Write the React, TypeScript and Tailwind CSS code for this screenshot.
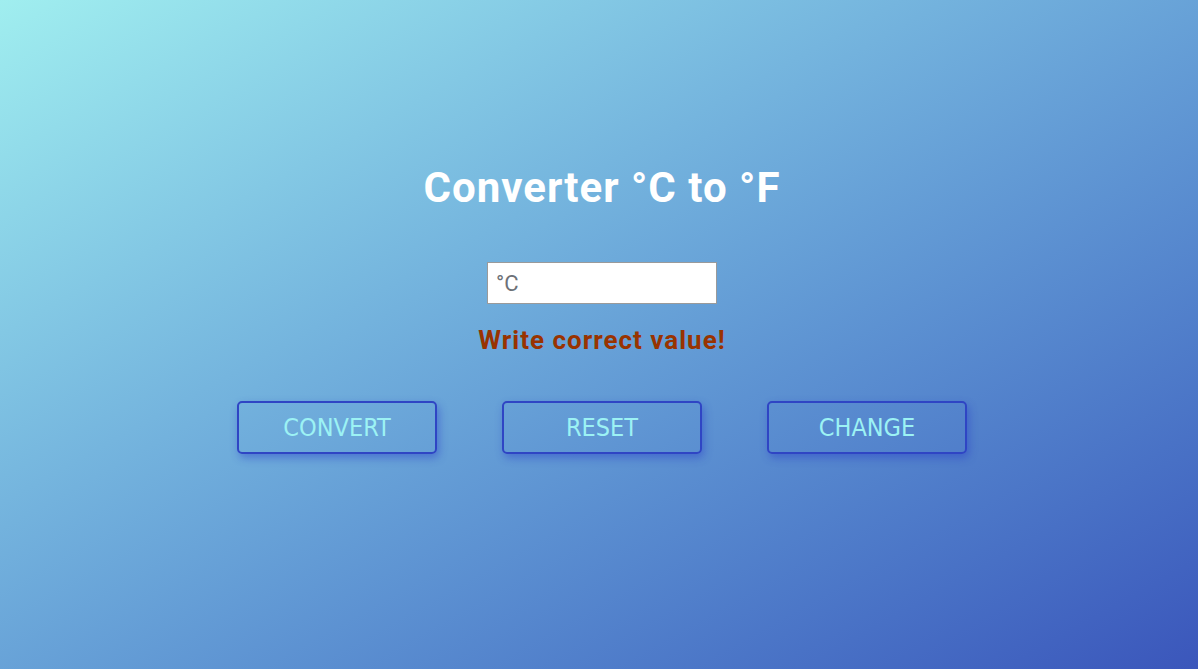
import { useState } from 'react';

const buttons = ['CONVERT', 'RESET', 'CHANGE'];

export default function App() {
  const [value, setValue] = useState('');

  return (
    <div className="h-[669px] w-full overflow-hidden bg-gradient-to-br from-[#a0eeef] to-[#3b56bb] font-['Roboto',sans-serif]">
      <div className="flex flex-col items-center pt-[162px] pl-[6px]">
        <h1 className="text-[42px] leading-[52px] font-bold tracking-[1px] text-white">
          Converter °C to °F
        </h1>

        <input
          value={value}
          onChange={(e) => setValue(e.target.value)}
          placeholder="°C"
          className="mt-[48px] h-[42px] w-[230px] border border-[#9a9a9a] bg-white px-2 text-[22px] text-gray-700 placeholder:text-[#6d7177] outline-none"
        />

        <p className="mt-[21px] text-[26px] leading-[30px] font-bold tracking-[1px] text-[#993300]">
          Write correct value!
        </p>

        <div className="mt-[46px] flex gap-[65px]">
          {buttons.map((label) => (
            <button
              key={label}
              className="h-[53px] w-[200px] rounded-[5px] border-2 border-[#2f45c4] bg-transparent font-['DejaVu_Sans_Condensed',sans-serif] text-[25px] text-[#9cf2f4] shadow-[2px_4px_8px_rgba(40,60,200,0.45)]"
            >
              {label}
            </button>
          ))}
        </div>
      </div>
    </div>
  );
}
